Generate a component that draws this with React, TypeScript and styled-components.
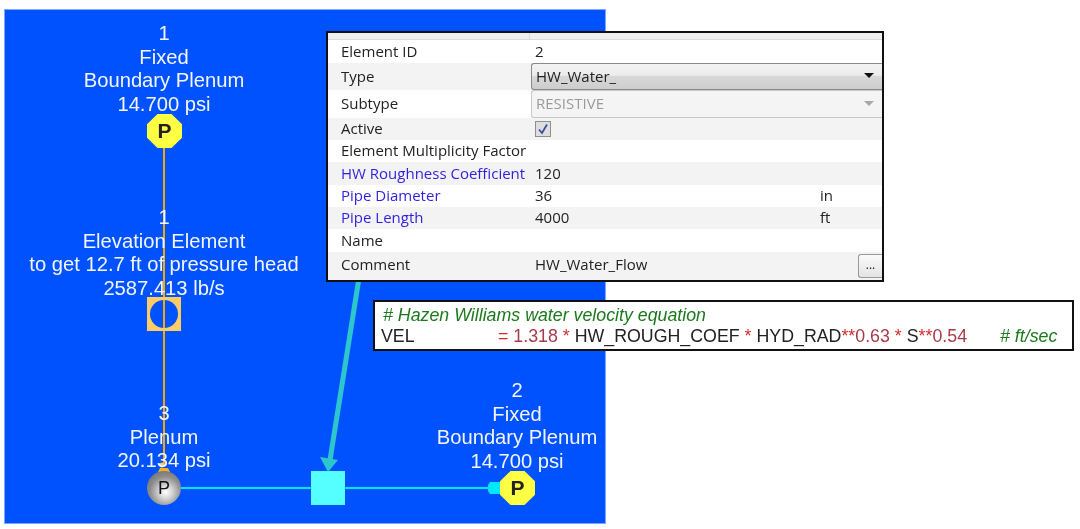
import React from "react";
import styled, { createGlobalStyle } from "styled-components";

const GlobalStyle = createGlobalStyle`
  html, body {
    margin: 0;
    padding: 0;
    background: #fff;
    overflow: hidden;
  }
`;

const Page = styled.div`
  position: relative;
  width: 1080px;
  height: 529px;
  background: #fff;
  overflow: hidden;
  filter: blur(0.35px);
`;

// the model canvas: everything inside sits at its diagram coordinates
const Canvas = styled.div`
  position: absolute;
  left: 5px;
  top: 10px;
  width: 600px;
  height: 513px;
  background: #0052ff;
  box-shadow: 0 0 0 1px #7ea8ff;
`;

const Wires = styled.svg`
  position: absolute;
  left: 0;
  top: 0;
`;

const NodeLabel = styled.div<{ $x: number; $y: number }>`
  position: absolute;
  left: ${(p) => p.$x - 160}px;
  top: ${(p) => p.$y}px;
  width: 320px;
  text-align: center;
  color: #f2f6ff;
  font-family: "Liberation Sans", Arial, sans-serif;
  font-size: 20.2px;
  line-height: 23.7px;
  white-space: nowrap;
`;

const Octagon = styled.div<{ $x: number; $y: number }>`
  position: absolute;
  left: ${(p) => p.$x - 17}px;
  top: ${(p) => p.$y - 17}px;
  width: 35px;
  height: 34px;
  background: #ffff44;
  clip-path: polygon(30% 0, 70% 0, 100% 30%, 100% 70%, 70% 100%, 30% 100%, 0 70%, 0 30%);
  display: flex;
  align-items: center;
  justify-content: center;
  color: #222;
  font-family: "Liberation Sans", Arial, sans-serif;
  font-weight: bold;
  font-size: 21px;
`;

const Sphere = styled.div<{ $x: number; $y: number }>`
  position: absolute;
  left: ${(p) => p.$x - 17}px;
  top: ${(p) => p.$y - 17}px;
  width: 34px;
  height: 34px;
  border-radius: 50%;
  background: radial-gradient(circle at 55% 62%, #ffffff 0%, #dcdcdc 20%, #8e8e8e 55%, #5e5e5e 100%);
  display: flex;
  align-items: center;
  justify-content: center;
  color: #111;
  font-family: "Liberation Sans", Arial, sans-serif;
  font-size: 18px;
`;

const ElevationBox = styled.div<{ $x: number; $y: number }>`
  position: absolute;
  left: ${(p) => p.$x - 17}px;
  top: ${(p) => p.$y - 17}px;
  width: 34px;
  height: 34px;
  background: #ffcc66;
  display: flex;
  align-items: center;
  justify-content: center;
`;

const ElevationHole = styled.div`
  width: 28px;
  height: 28px;
  border-radius: 50%;
  background: linear-gradient(
    to right,
    #0052ff 0,
    #0052ff 13px,
    #f5a800 13px,
    #f5a800 15px,
    #0052ff 15px
  );
`;

const ElementBox = styled.div<{ $x: number; $y: number }>`
  position: absolute;
  left: ${(p) => p.$x - 17}px;
  top: ${(p) => p.$y - 17}px;
  width: 34px;
  height: 34px;
  background: #55ffff;
`;

const Callout = styled.svg`
  position: absolute;
  left: 0;
  top: 0;
  pointer-events: none;
`;

// property grid dialog, floats over the canvas
const Panel = styled.div`
  position: absolute;
  left: 326px;
  top: 31px;
  width: 554px;
  height: 247px;
  border: 2px solid #111;
  background: #fff;
  display: flex;
  flex-direction: column;
  overflow: hidden;
  font-family: "Open Sans", "Noto Sans", sans-serif;
  font-size: 15px;
  color: #222;
`;

const PanelHead = styled.div`
  height: 6px;
  flex: none;
  display: grid;
  grid-template-columns: 202px 1fr;
  background: #f0f0f0;
  border-bottom: 1px solid #dcdcdc;
`;

const HeadCell = styled.div`
  border-right: 1px solid #dcdcdc;
`;

const Row = styled.div<{ $h: number; $shade?: boolean }>`
  flex: none;
  height: ${(p) => p.$h}px;
  display: grid;
  grid-template-columns: 203px 289px 1fr;
  align-items: center;
  background: ${(p) => (p.$shade ? "#f3f3f3" : "#fff")};
  white-space: nowrap;
`;

const LastRow = styled(Row)`
  align-items: start;
  padding-top: 4px;
  box-sizing: border-box;
`;

const Label = styled.div<{ $link?: boolean }>`
  margin-top: -2px;
  padding-left: 13px;
  color: ${(p) => (p.$link ? "#2f1fe0" : "#222")};
`;

const Value = styled.div`
  margin-top: -2px;
  padding-left: 4px;
`;

const Unit = styled.div`
  margin-top: -2px;
  display: flex;
  align-items: center;
  justify-content: space-between;
`;

const SelectBox = styled.div<{ $disabled?: boolean }>`
  grid-column: 2 / 4;
  height: 100%;
  box-sizing: border-box;
  display: flex;
  align-items: center;
  justify-content: space-between;
  padding: 0 8px 2px 4px;
  border: 1px solid ${(p) => (p.$disabled ? "#c8c8c8" : "#8a8a8a")};
  border-right: none;
  border-radius: 3px 0 0 3px;
  color: ${(p) => (p.$disabled ? "#9a9a9a" : "#222")};
  background: ${(p) =>
    p.$disabled
      ? "#f4f4f4"
      : "linear-gradient(to bottom, #f3f3f3 0%, #ececec 45%, #d8d8d8 50%, #cdcdcd 100%)"};
`;

const Caret = styled.span<{ $disabled?: boolean }>`
  width: 0;
  height: 0;
  border-left: 5px solid transparent;
  border-right: 5px solid transparent;
  border-top: 5px solid ${(p) => (p.$disabled ? "#a8a8a8" : "#111")};
`;

const CheckBox = styled.div`
  width: 16px;
  height: 16px;
  margin-top: 2px;
  box-sizing: border-box;
  border: 1px solid #8f8f8f;
  background: #dedede;
  display: flex;
  align-items: center;
  justify-content: center;
`;

const MoreButton = styled.div`
  width: 24px;
  height: 24px;
  margin-left: auto;
  box-sizing: border-box;
  border: 1px solid #9a9a9a;
  border-right: none;
  border-radius: 3px 0 0 3px;
  background: linear-gradient(to bottom, #fafafa, #e4e4e4);
  font-size: 12px;
  line-height: 20px;
  text-align: center;
`;

const CodeBox = styled.div`
  position: absolute;
  left: 373px;
  top: 300px;
  width: 691px;
  height: 44px;
  border: 2px solid #111;
  background: #fff;
  padding: 3px 0 0 6px;
  font-family: "Liberation Sans", Arial, sans-serif;
  font-size: 17.8px;
  line-height: 21px;
  color: #222;
  white-space: nowrap;
`;

const CommentLine = styled.div`
  color: #1c7a1c;
  font-style: italic;
  padding-left: 2px;
`;

const CodeLine = styled.div`
  display: grid;
  grid-template-columns: 117px 502px 1fr;
`;

const Red = styled.span`
  color: #d42a2a;
`;

const Num = styled.span`
  color: #a83a4a;
`;

const TrailComment = styled.span`
  color: #1c7a1c;
  font-style: italic;
`;

const DiagramCanvas = () => (
  <Canvas>
    <Wires width="600" height="513">
      <line x1="159" y1="137" x2="159" y2="455" stroke="#f5a800" strokeWidth="2" />
      <polygon points="155,458 163,458 165,462 165,464 153,464 153,462" fill="#f5b020" />
      <circle cx="157" cy="455" r="2.5" fill="#ffcf60" />
      <line x1="176" y1="478" x2="490" y2="478" stroke="#00e6ff" strokeWidth="2" />
      <polygon points="485,472 496,472 496,484 485,484 483,481 483,475" fill="#00e6ff" />
    </Wires>
    <ElevationBox $x={159} $y={304}>
      <ElevationHole />
    </ElevationBox>
    <ElementBox $x={323} $y={478} />
    <Octagon $x={159} $y={121}>P</Octagon>
    <Sphere $x={159} $y={478}>P</Sphere>
    <Octagon $x={512} $y={478}>P</Octagon>
    <NodeLabel $x={159} $y={12}>
      1<br />Fixed<br />Boundary Plenum<br />14.700 psi
    </NodeLabel>
    <NodeLabel $x={159} $y={196}>
      1<br />Elevation Element<br />to get 12.7 ft of pressure head<br />2587.413 lb/s
    </NodeLabel>
    <NodeLabel $x={159} $y={392}>
      3<br />Plenum<br />20.134 psi
    </NodeLabel>
    <NodeLabel $x={512} $y={369}>
      2<br />Fixed<br />Boundary Plenum<br />14.700 psi
    </NodeLabel>
  </Canvas>
);

const PropertyPanel = () => (
  <Panel>
    <PanelHead>
      <HeadCell />
    </PanelHead>
    <Row $h={23}>
      <Label>Element ID</Label>
      <Value>2</Value>
    </Row>
    <Row $h={27} $shade>
      <Label>Type</Label>
      <SelectBox>
        HW_Water_
        <Caret />
      </SelectBox>
    </Row>
    <Row $h={28}>
      <Label>Subtype</Label>
      <SelectBox $disabled>
        RESISTIVE
        <Caret $disabled />
      </SelectBox>
    </Row>
    <Row $h={22} $shade>
      <Label>Active</Label>
      <Value>
        <CheckBox>
          <svg width="12" height="12" viewBox="0 0 12 12">
            <path d="M2 6.5 L5 10 L10 1.5" fill="none" stroke="#3a4f9a" strokeWidth="1.8" />
          </svg>
        </CheckBox>
      </Value>
    </Row>
    <Row $h={22}>
      <Label>Element Multiplicity Factor</Label>
    </Row>
    <Row $h={23} $shade>
      <Label $link>HW Roughness Coefficient</Label>
      <Value>120</Value>
    </Row>
    <Row $h={22}>
      <Label $link>Pipe Diameter</Label>
      <Value>36</Value>
      <Unit>in</Unit>
    </Row>
    <Row $h={22} $shade>
      <Label $link>Pipe Length</Label>
      <Value>4000</Value>
      <Unit>ft</Unit>
    </Row>
    <Row $h={23}>
      <Label>Name</Label>
    </Row>
    <LastRow $h={30} $shade>
      <Label>Comment</Label>
      <Value>HW_Water_Flow</Value>
      <Unit>
        <MoreButton>...</MoreButton>
      </Unit>
    </LastRow>
  </Panel>
);

const EquationBox = () => (
  <CodeBox>
    <CommentLine># Hazen Williams water velocity equation</CommentLine>
    <CodeLine>
      <span>VEL</span>
      <span>
        <Red>=</Red> <Num>1.318</Num> <Red>*</Red> HW_ROUGH_COEF <Red>*</Red> HYD_RAD<Red>**</Red>
        <Num>0.63</Num> <Red>*</Red> S<Red>**</Red>
        <Num>0.54</Num>
      </span>
      <TrailComment># ft/sec</TrailComment>
    </CodeLine>
  </CodeBox>
);

export default function App() {
  return (
    <Page>
      <GlobalStyle />
      <DiagramCanvas />
      <Callout width="1080" height="529">
        <line x1="359" y1="278" x2="330" y2="460" stroke="#2cc6cc" strokeWidth="5" />
        <polygon points="320,457 338,460 328,472" fill="#2cc6cc" />
      </Callout>
      <PropertyPanel />
      <EquationBox />
    </Page>
  );
}
